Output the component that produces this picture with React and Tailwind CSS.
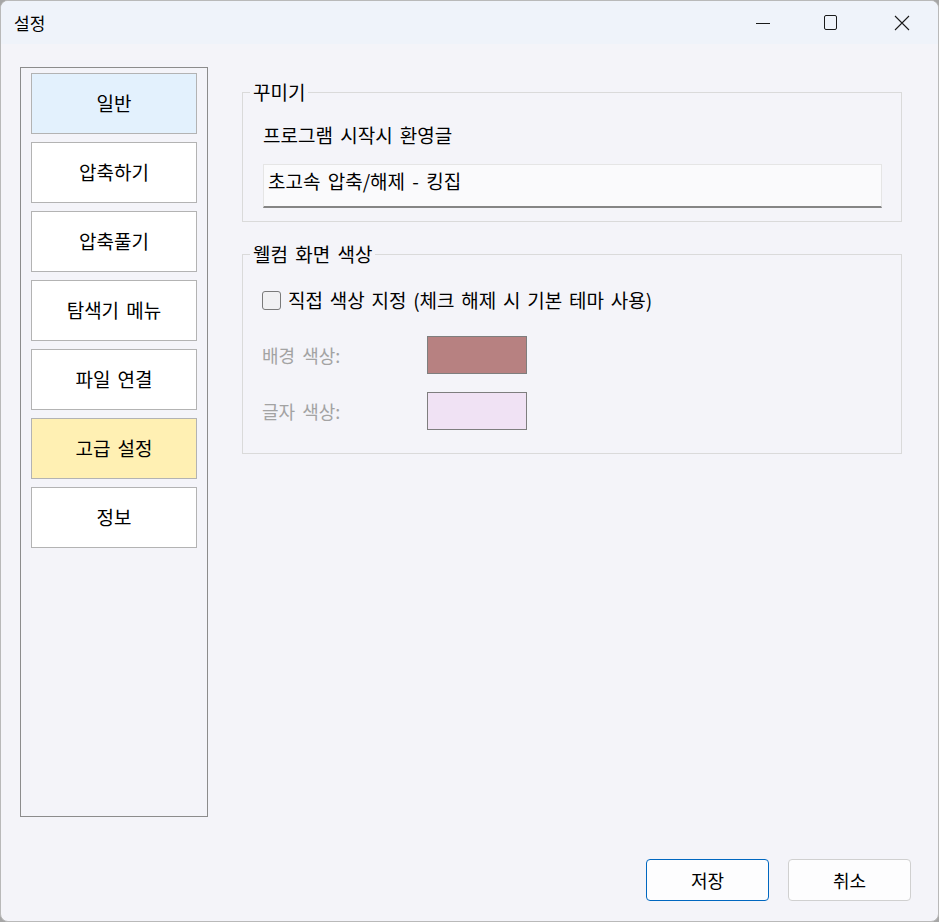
import React from "react";

const F = { fontFamily: '"Noto Sans CJK KR", "Noto Sans", sans-serif' };

function NavBtn({ label, bg }) {
  return (
    <div
      className={`h-[61px] w-[166px] border border-[#b3b3b3] flex items-center justify-center text-[19px] [word-spacing:3px] text-black ${bg}`}
    >
      {label}
    </div>
  );
}

export default function App() {
  const items = [
    ["일반", "bg-[#e3f1fd]"],
    ["압축하기", "bg-white"],
    ["압축풀기", "bg-white"],
    ["탐색기 메뉴", "bg-white"],
    ["파일 연결", "bg-white"],
    ["고급 설정", "bg-[#fff0b3]"],
    ["정보", "bg-white"],
  ];
  return (
    <div className="w-[939px] h-[922px] bg-[#a6a6a6] overflow-hidden" style={F}>
      <div className="w-[939px] h-[922px] rounded-[8px] border border-[#b9b9b9] bg-[#f4f4f9] flex flex-col overflow-hidden">
        {/* title bar */}
        <div className="h-[43px] shrink-0 bg-[#eff3fa] flex items-center">
          <div className="pl-[13px] text-[17px] text-black leading-none">설정</div>
          <div className="ml-auto flex items-center h-full">
            <div className="w-[66px] h-full flex items-center justify-center">
              <svg width="16" height="16" viewBox="0 0 16 16">
                <line x1="1" y1="8.5" x2="15" y2="8.5" stroke="#1a1a1a" strokeWidth="1" />
              </svg>
            </div>
            <div className="w-[70px] h-full flex items-center justify-center">
              <svg width="16" height="16" viewBox="0 0 16 16">
                <rect x="1.5" y="0.5" width="12" height="14" rx="1.5" fill="none" stroke="#1a1a1a" strokeWidth="1" />
              </svg>
            </div>
            <div className="w-[72px] h-full flex items-center justify-center">
              <svg width="16" height="16" viewBox="0 0 16 16">
                <path d="M1 1 L15 15 M15 1 L1 15" stroke="#1a1a1a" strokeWidth="1.1" />
              </svg>
            </div>
          </div>
        </div>

        {/* body */}
        <div className="flex-1 flex flex-col">
          <div className="flex pt-[23px] pl-[19px]">
            {/* sidebar */}
            <div className="w-[188px] h-[750px] border border-[#8c8c8c] flex flex-col items-center pt-[5px] gap-[8px]">
              {items.map(([l, b]) => (
                <NavBtn key={l} label={l} bg={b} />
              ))}
            </div>

            {/* content */}
            <div className="ml-[34px] w-[660px] flex flex-col pt-[25px] text-[19px] [word-spacing:3px]">
              {/* group 1 */}
              <div className="relative border border-[#dadada] h-[130px] px-[20px] pt-[32px]">
                <div className="absolute left-[7px] top-[-14px] bg-[#f4f4f9] px-[3px] text-black leading-[26px]">
                  꾸미기
                </div>
                <div className="text-black leading-[20px]">프로그램 시작시 환영글</div>
                <div className="mt-[19px] h-[44px] w-[619px] bg-[#fafafc] border border-[#e5e5e5] border-b-[2px] border-b-[#858585] flex items-start pl-[4px] pt-[3px] leading-[26px] text-black">
                  초고속 압축/해제 - 킹집
                </div>
              </div>

              {/* group 2 */}
              <div className="relative mt-[32px] border border-[#dadada] h-[200px] px-[19px] pt-[34px]">
                <div className="absolute left-[7px] top-[-14px] bg-[#f4f4f9] px-[3px] text-black leading-[26px]">
                  웰컴 화면 색상
                </div>
                <div className="flex items-center">
                  <div className="w-[19px] h-[19px] rounded-[3px] border border-[#7a7a7a] bg-[#f1f1f3]" />
                  <div className="ml-[7px] text-black leading-[22px] [word-spacing:2.5px]">직접 색상 지정 (체크 해제 시 기본 테마 사용)</div>
                </div>
                <div className="flex items-center mt-[25px]">
                  <div className="w-[165px] text-[18px] text-[#a3a3a3]">배경 색상:</div>
                  <div className="w-[100px] h-[38px] bg-[#b78181] border border-[#7e7e7e]" />
                </div>
                <div className="flex items-center mt-[18px]">
                  <div className="w-[165px] text-[18px] text-[#a3a3a3]">글자 색상:</div>
                  <div className="w-[100px] h-[38px] bg-[#f0e2f4] border border-[#7e7e7e]" />
                </div>
              </div>
            </div>
          </div>

          {/* buttons */}
          <div className="flex justify-end gap-[19px] pr-[27px] mt-[42px]">
            <div className="w-[123px] h-[42px] rounded-[4px] border border-[#0067c0] bg-[#fdfdfe] flex items-center justify-center text-[18px] text-black">
              저장
            </div>
            <div className="w-[123px] h-[42px] rounded-[4px] border border-[#d0d0d0] bg-[#fdfdfe] flex items-center justify-center text-[18px] text-black">
              취소
            </div>
          </div>
        </div>
      </div>
    </div>
  );
}
